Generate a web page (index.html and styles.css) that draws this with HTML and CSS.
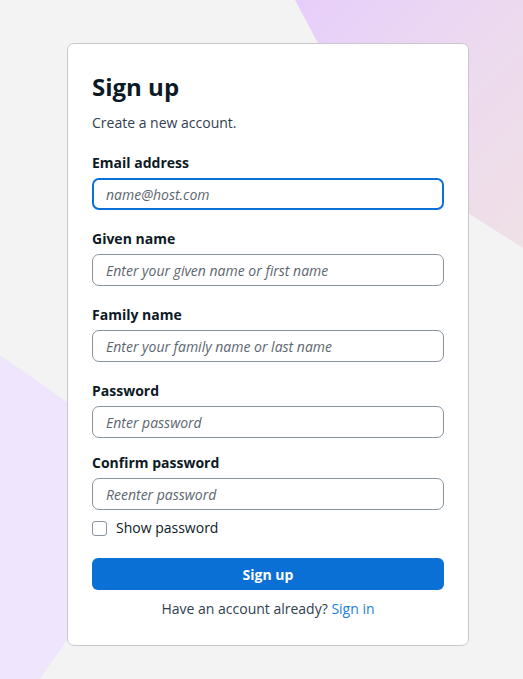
FILE: index.html
```html
<!DOCTYPE html>
<html lang="en">
<head>
<meta charset="utf-8">
<title>Sign up</title>
<link rel="stylesheet" href="styles.css">
</head>
<body>
<div class="deco deco-top"></div>
<div class="deco deco-bottom"></div>
<main class="page">
  <section class="card">
    <h1 class="title">Sign up</h1>
    <p class="subtitle">Create a new account.</p>
    <form class="form">
      <div class="field">
        <label class="label" for="email">Email address</label>
        <input class="input input-focused" id="email" type="email" placeholder="name@host.com">
      </div>
      <div class="field">
        <label class="label" for="given">Given name</label>
        <input class="input" id="given" type="text" placeholder="Enter your given name or first name">
      </div>
      <div class="field">
        <label class="label" for="family">Family name</label>
        <input class="input" id="family" type="text" placeholder="Enter your family name or last name">
      </div>
      <div class="field">
        <label class="label" for="pw">Password</label>
        <input class="input" id="pw" type="password" placeholder="Enter password">
      </div>
      <div class="field field-confirm">
        <label class="label" for="pw2">Confirm password</label>
        <input class="input" id="pw2" type="password" placeholder="Reenter password">
      </div>
      <label class="check-row">
        <span class="checkbox"></span>
        <span class="check-text">Show password</span>
      </label>
      <button class="button" type="button">Sign up</button>
      <p class="footer">Have an account already? <a class="link" href="#">Sign in</a></p>
    </form>
  </section>
</main>
</body>
</html>
```
FILE: styles.css
```css
html {
  background: #f3f3f3;
}
body {
  margin: 0;
  font-family: "Open Sans", "Noto Sans", sans-serif;
  color: #0d1a26;
}
.deco {
  position: fixed;
  z-index: -1;
}
.deco-top {
  left: 295px;
  top: 0;
  width: 228px;
  height: 248px;
  background: linear-gradient(135deg, #e7cefb 0%, #ecd9f0 45%, #f0e0e6 100%);
  clip-path: polygon(0 0, 100% 0, 100% 100%, 83px 156px);
}
.deco-bottom {
  left: 0;
  top: 355px;
  width: 178px;
  height: 324px;
  background: #efe5fc;
  clip-path: polygon(0 0, 178px 125px, 40px 324px, 0 324px);
}
.page {
  padding: 43px 0 0 67px;
}
.card {
  width: 352px;
  background: #ffffff;
  border: 1px solid #c8c8ce;
  border-radius: 7px;
  padding: 28px 24px 26px;
}
.title {
  margin: 0;
  font-size: 24px;
  line-height: 30px;
  font-weight: 700;
  color: #0d1a26;
}
.subtitle {
  margin: 11px 0 0;
  font-size: 14px;
  line-height: 20px;
  color: #304050;
}
.form {
  display: flex;
  flex-direction: column;
  margin-top: 20px;
}
.field {
  display: flex;
  flex-direction: column;
  gap: 5px;
  margin-bottom: 19px;
}
.field-confirm {
  margin-top: -4px;
  margin-bottom: 8px;
}
.label {
  font-size: 14px;
  line-height: 20px;
  font-weight: 700;
  color: #0d1a26;
}
.input {
  box-sizing: border-box;
  height: 32px;
  width: 100%;
  border: 1px solid #89949f;
  border-radius: 7px;
  padding: 0 13px;
  font-family: inherit;
  font-size: 14px;
  color: #0d1a26;
  background: #fff;
  outline: none;
}
.input::placeholder {
  font-style: italic;
  color: #5c6670;
}
.input-focused {
  border: 2px solid #0b70d5;
  padding: 0 12px;
}
.check-row {
  display: flex;
  align-items: center;
  gap: 9px;
  height: 20px;
  font-size: 14px;
  line-height: 20px;
  color: #0d1a26;
}
.checkbox {
  box-sizing: border-box;
  width: 15px;
  height: 15px;
  border: 1.5px solid #89949f;
  border-radius: 3px;
  background: #fff;
}
.button {
  margin-top: 20px;
  height: 32px;
  border: none;
  border-radius: 6px;
  background: #0b70d5;
  color: #fff;
  font-family: inherit;
  font-size: 14px;
  font-weight: 700;
}
.footer {
  margin: 9px 0 0;
  text-align: center;
  font-size: 14px;
  line-height: 20px;
  color: #304050;
}
.link {
  color: #1a80e0;
  text-decoration: none;
}
```
